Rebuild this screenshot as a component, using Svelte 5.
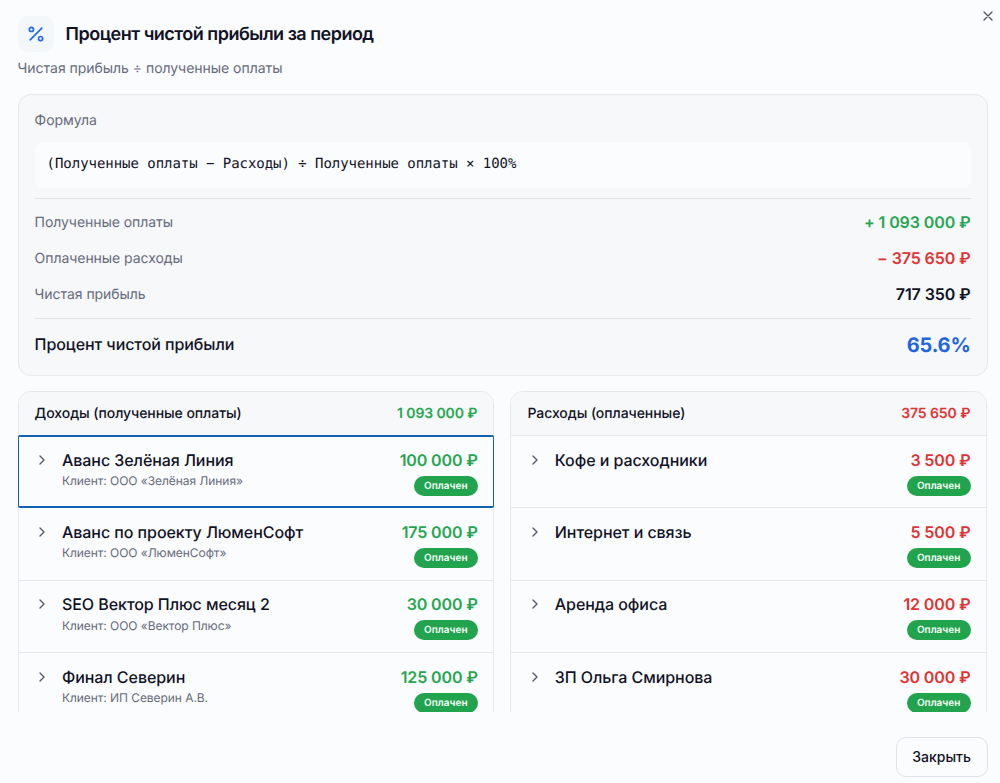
<script>
  const incomes = [
    { name: 'Аванс Зелёная Линия', client: 'ООО «Зелёная Линия»', sum: '100 000 ₽', active: true },
    { name: 'Аванс по проекту ЛюменСофт', client: 'ООО «ЛюменСофт»', sum: '175 000 ₽' },
    { name: 'SEO Вектор Плюс месяц 2', client: 'ООО «Вектор Плюс»', sum: '30 000 ₽' },
    { name: 'Финал Северин', client: 'ИП Северин А.В.', sum: '125 000 ₽' }
  ];
  const expenses = [
    { name: 'Кофе и расходники', sum: '3 500 ₽' },
    { name: 'Интернет и связь', sum: '5 500 ₽' },
    { name: 'Аренда офиса', sum: '12 000 ₽' },
    { name: 'ЗП Ольга Смирнова', sum: '30 000 ₽' }
  ];
  const panels = [
    { title: 'Доходы (полученные оплаты)', total: '1 093 000 ₽', tone: 'green', rows: incomes },
    { title: 'Расходы (оплаченные)', total: '375 650 ₽', tone: 'red', rows: expenses }
  ];
</script>

<div class="dialog">
  <button class="close" aria-label="×">
    <svg width="16" height="16" viewBox="0 0 24 24" fill="none" stroke="currentColor" stroke-width="2" stroke-linecap="round" stroke-linejoin="round"><path d="M18 6 6 18M6 6l12 12" /></svg>
  </button>
  <header>
    <span class="badge-icon">
      <svg width="20" height="20" viewBox="0 0 24 24" fill="none" stroke="currentColor" stroke-width="2" stroke-linecap="round" stroke-linejoin="round"><path d="M19 5 5 19" /><circle cx="6.5" cy="6.5" r="2.5" /><circle cx="17.5" cy="17.5" r="2.5" /></svg>
    </span>
    <h1>Процент чистой прибыли за период</h1>
  </header>
  <p class="subtitle">Чистая прибыль ÷ полученные оплаты</p>

  <section class="summary">
    <div class="label">Формула</div>
    <div class="formula">(Полученные оплаты − Расходы) ÷ Полученные оплаты × 100%</div>
    <div class="lines">
      <div class="line"><span class="label">Полученные оплаты</span><b class="green">+ 1 093 000 ₽</b></div>
      <div class="line"><span class="label">Оплаченные расходы</span><b class="red">− 375 650 ₽</b></div>
      <div class="line"><span class="label">Чистая прибыль</span><b>717 350 ₽</b></div>
    </div>
    <div class="total"><span>Процент чистой прибыли</span><strong>65.6%</strong></div>
  </section>

  <div class="panels">
    {#each panels as panel}
      <section class="panel">
        <div class="head"><span>{panel.title}</span><b class={panel.tone}>{panel.total}</b></div>
        {#each panel.rows as row}
          <div class="row" class:active={row.active}>
            <svg class="chevron" width="16" height="16" viewBox="0 0 24 24" fill="none" stroke="currentColor" stroke-width="2" stroke-linecap="round" stroke-linejoin="round"><path d="m9 18 6-6-6-6" /></svg>
            <div class="info">
              <div class="name">{row.name}</div>
              {#if row.client}<div class="client">Клиент: {row.client}</div>{/if}
            </div>
            <div class="side">
              <div class="sum {panel.tone}">{row.sum}</div>
              <span class="pill">Оплачен</span>
            </div>
          </div>
        {/each}
      </section>
    {/each}
  </div>

  <footer><button class="dismiss">Закрыть</button></footer>
</div>

<style>
  :global(body) { background: #fafcfe; }
  .dialog {
    position: relative;
    box-sizing: border-box;
    height: 783px;
    padding: 16px 12.4px 0 17.6px;
    overflow: hidden;
    display: flex;
    flex-direction: column;
    background: #fafcfe;
    color: #111225;
    font-family: Inter, sans-serif;
    font-size: 14px;
    text-rendering: geometricPrecision;
  }
  button { font: inherit; color: inherit; }
  .close {
    position: absolute;
    top: 8px;
    right: 4.5px;
    width: 16px;
    height: 16px;
    padding: 0;
    border: 0;
    background: none;
    color: #55565e;
  }
  .close svg, .badge-icon svg { display: block; }
  header { display: flex; align-items: center; gap: 12px; height: 36px; }
  .badge-icon {
    display: grid;
    place-items: center;
    width: 36px;
    height: 36px;
    border-radius: 10px;
    background: #f4f7fa;
    color: #1f6ae6;
  }
  h1 { margin: 0; padding-top: 2px; font-size: 18px; line-height: 28px; font-weight: 600; letter-spacing: -0.51px; }
  .subtitle { margin: 7px 0 0; line-height: 20px; color: #676b7b; letter-spacing: -0.03px; }
  .summary {
    box-sizing: border-box;
    height: 281.5px;
    margin-top: 15px;
    padding: 16px 16px 0;
    border: 1px solid #e5e8ec;
    border-radius: 13px;
    background: #f6f8fa;
  }
  .label { line-height: 20px; color: #676b7b; letter-spacing: -0.05px; }
  .line .label { padding-top: 2px; }
  .formula {
    box-sizing: border-box;
    height: 46px;
    margin-top: 11px;
    padding: 0 12px;
    border-radius: 8px;
    background: #fafcfe;
    font-family: "DejaVu Sans Mono", monospace;
    line-height: 45px;
    white-space: nowrap;
    letter-spacing: -0.04px;
  }
  .lines {
    display: grid;
    grid-template-rows: repeat(3, 35.8px);
    height: 120px;
    box-sizing: border-box;
    margin-top: 10px;
    padding-top: 5.5px;
    border-top: 1px solid #dde1e6;
  }
  .line, .total, .head { display: flex; align-items: center; justify-content: space-between; }
  .line b { font-size: 16px; font-weight: 600; letter-spacing: -0.1px; }
  .total { height: 51px; border-top: 1px solid #dde1e6; font-size: 16px; font-weight: 600; }
  .total span { padding-bottom: 2px; font-weight: 500; letter-spacing: -0.07px; }
  .total strong { font-size: 20px; font-weight: 700; color: #1f65df; letter-spacing: -0.15px; }
  .green { color: #26a651; }
  .red { color: #e03332; }
  .panels {
    display: grid;
    grid-template-columns: 1fr 1fr;
    gap: 16px;
    height: 321px;
    margin: 15.5px 0.4px 0 0;
    overflow: hidden;
  }
  .panel {
    box-sizing: border-box;
    height: 360px;
    border: 1px solid #e5e8ec;
    border-radius: 13px 13px 0 0;
  }
  .head {
    box-sizing: border-box;
    height: 43px;
    padding: 0 16px 1px;
    border-radius: 12px 12px 0 0;
    background: #f6f8fa;
    font-weight: 500;
    letter-spacing: -0.06px;
  }
  .head b { font-weight: 600; letter-spacing: -0.1px; }
  .row {
    box-sizing: border-box;
    display: flex;
    height: 72.3px;
    padding: 11.7px 15.6px 0 15.4px;
    border-top: 1px solid #e5e8ec;
  }
  .row.active {
    position: relative;
    margin: 0 -1px;
    padding: 11.7px 16.6px 0 16.4px;
    border-top-color: transparent;
  }
  .row.active::after {
    content: "";
    position: absolute;
    inset: -1px 0 -1px 0;
    border: solid #1262b4;
    border-width: 2px 1px;
    border-radius: 2px;
  }
  .chevron { flex: none; margin-top: 4px; color: #565a68; }
  .info { flex: 1; margin-left: 12px; }
  .name, .sum { font-size: 16px; line-height: 24px; font-weight: 500; letter-spacing: -0.06px; }
  .client { font-size: 12px; line-height: 16px; margin-top: 1.5px; color: #676b7b; letter-spacing: -0.06px; }
  .side { display: flex; flex-direction: column; align-items: flex-end; }
  .sum { font-weight: 600; letter-spacing: -0.12px; }
  .pill {
    box-sizing: border-box;
    width: 64px;
    height: 20px;
    margin-top: 4.1px;
    border-radius: 10px;
    background: #22a34d;
    color: #f5fff8;
    font-size: 10px;
    line-height: 20px;
    font-weight: 600;
    text-align: center;
  }
  footer { display: flex; justify-content: flex-end; margin-top: 25px; }
  .dismiss {
    box-sizing: border-box;
    width: 92px;
    height: 40px;
    padding: 0 0 1px;
    border: 1px solid #dfe2e8;
    border-radius: 10px;
    background: #fbfcfe;
    font-weight: 500;
  }
</style>
